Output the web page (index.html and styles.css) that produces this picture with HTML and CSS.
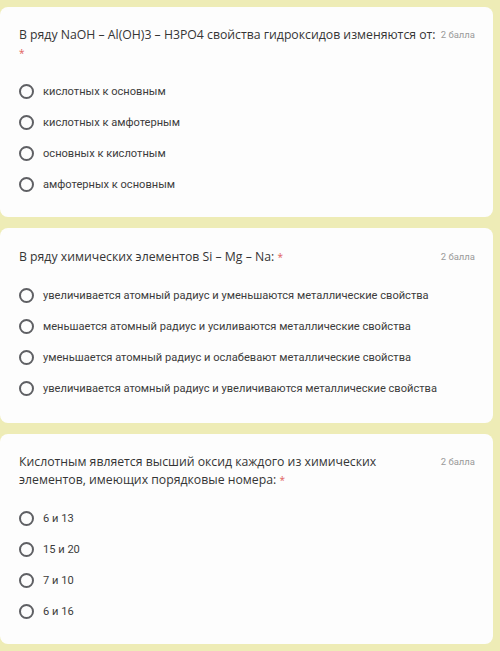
FILE: index.html
```html
<!DOCTYPE html>
<html lang="ru">
<head>
    <meta charset="UTF-8">
    <meta name="viewport" content="width=device-width, initial-scale=1.0">
    <title>Тест по химии</title>
    <link rel="stylesheet" href="styles.css">
</head>
<body>
    <div class="form">
        <!-- Вопрос 1 -->
        <div class="card">
            <div class="card__head">
                <div class="card__title">В ряду NaOH – Al(OH)3 – H3PO4 свойства гидроксидов изменяются от:<br><span class="req">*</span></div>
                <div class="card__points">2 балла</div>
            </div>
            <div class="option"><span class="radio"></span>кислотных к основным</div>
            <div class="option"><span class="radio"></span>кислотных к амфотерным</div>
            <div class="option"><span class="radio"></span>основных к кислотным</div>
            <div class="option"><span class="radio"></span>амфотерных к основным</div>
        </div>

        <!-- Вопрос 2 -->
        <div class="card card--short">
            <div class="card__head">
                <div class="card__title">В ряду химических элементов Si – Mg – Na: <span class="req">*</span></div>
                <div class="card__points">2 балла</div>
            </div>
            <div class="option"><span class="radio"></span>увеличивается атомный радиус и уменьшаются металлические свойства</div>
            <div class="option"><span class="radio"></span>меньшается атомный радиус и усиливаются металлические свойства</div>
            <div class="option"><span class="radio"></span>уменьшается атомный радиус и ослабевают металлические свойства</div>
            <div class="option"><span class="radio"></span>увеличивается атомный радиус и увеличиваются металлические свойства</div>
        </div>

        <!-- Вопрос 3 -->
        <div class="card">
            <div class="card__head">
                <div class="card__title">Кислотным является высший оксид каждого из химических<br>элементов, имеющих порядковые номера: <span class="req">*</span></div>
                <div class="card__points">2 балла</div>
            </div>
            <div class="option"><span class="radio"></span>6 и 13</div>
            <div class="option"><span class="radio"></span>15 и 20</div>
            <div class="option"><span class="radio"></span>7 и 10</div>
            <div class="option"><span class="radio"></span>6 и 16</div>
        </div>
    </div>
</body>
</html>
```

FILE: styles.css
```css
body, html {
    margin: 0;
    padding: 0;
    background: #eeecb6;
}
.form {
    width: 493px;
    padding-top: 7px;
    display: flex;
    flex-direction: column;
    gap: 11px;
}
.card {
    background: #fdfdfd;
    border-radius: 8px;
    padding: 19px 18px 17px 19px;
}
.card--short {
    padding-top: 20px;
    padding-bottom: 19px;
}
.card__head {
    display: flex;
    justify-content: space-between;
    align-items: flex-start;
    margin-bottom: 14px;
}
.card__title {
    font-family: "Open Sans", sans-serif;
    font-size: 12.25px;
    line-height: 18px;
    color: #353535;
    white-space: nowrap;
}
.req {
    color: #e0605a;
    font-size: 10px;
}
.card__points {
    font-family: Roboto, sans-serif;
    font-size: 9.5px;
    line-height: 18px;
    color: #9a9a9a;
    white-space: nowrap;
}
.option {
    height: 31px;
    display: flex;
    align-items: center;
    font-family: Roboto, sans-serif;
    font-size: 11.1px;
    color: #3c3c3c;
}
.radio {
    width: 11px;
    height: 11px;
    border: 2px solid #5f6064;
    border-radius: 50%;
    margin-right: 9px;
    flex-shrink: 0;
}
```
